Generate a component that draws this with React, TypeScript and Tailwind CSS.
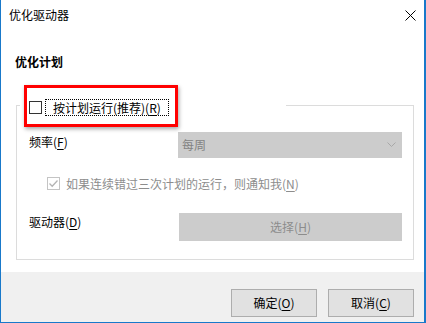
import React from 'react'

const font = { fontFamily: '"Noto Sans CJK SC", "Liberation Sans", sans-serif' }

function Check({ checked, disabled }: { checked?: boolean; disabled?: boolean }) {
  return (
    <div
      className={`w-[13px] h-[13px] shrink-0 border bg-white flex items-center justify-center ${
        disabled ? 'border-[#c4c4c4]' : 'border-[#333333]'
      }`}
    >
      {checked && (
        <svg width="11" height="11" viewBox="0 0 11 11">
          <path d="M1.5 5.5 L4.2 8.2 L9.5 2.5" fill="none" stroke={disabled ? '#b4b4b4' : '#000'} strokeWidth="1.3" />
        </svg>
      )}
    </div>
  )
}

function Key({ k }: { k: string }) {
  return <span className="underline underline-offset-[2px] decoration-[1px]">{k}</span>
}

export default function App() {
  return (
    <div
      className="relative w-[426px] h-[323px] flex flex-col bg-white border-l border-r-2 border-b border-[#1979ca] text-[12px] leading-[16px] text-black overflow-hidden"
      style={font}
    >
      {/* Title bar */}
      <div className="h-[30px] shrink-0 flex items-center justify-between pl-[8px] pr-[8px]">
        <span>优化驱动器</span>
        <svg width="11" height="11" viewBox="0 0 11 11">
          <path d="M0.5 0.5 L10.5 10.5 M10.5 0.5 L0.5 10.5" stroke="#000" strokeWidth="1" />
        </svg>
      </div>

      {/* Body */}
      <div className="h-[242px] shrink-0 flex flex-col">
        <div className="mt-[24px] pl-[14px] font-bold">优化计划</div>

        <div className="mt-[35px] ml-[15px] w-[398px] h-[155px] border border-[#dcdcdc] flex flex-col">
          {/* Group header */}
          <div className="-mt-[7px] ml-[3px] w-[266px] h-[17px] bg-white flex items-center pl-[9px]">
            <Check />
            <div className="ml-[3px] h-[17px] flex items-center px-[7px] border border-dotted border-black">
              按计划运行(推荐)(<Key k="R" />)
            </div>
          </div>

          {/* Frequency */}
          <div className="mt-[16px] h-[26px] flex items-start pl-[12px]">
            <span className="w-[149px] shrink-0 mt-[2px]">
              频率(<Key k="F" />)
            </span>
            <div className="w-[224px] h-[26px] bg-[#cccccc] flex items-center justify-between pl-[4px] pr-[6px] text-[#838383]">
              <span>每周</span>
              <svg width="9" height="6" viewBox="0 0 9 6">
                <path d="M0.5 0.5 L4.5 4.5 L8.5 0.5" fill="none" stroke="#a8a8a8" strokeWidth="1" />
              </svg>
            </div>
          </div>

          {/* Notify */}
          <div className="mt-[19px] h-[13px] flex items-center pl-[30px] text-[#8d8d8d]">
            <Check checked disabled />
            <span className="ml-[6px]">
              如果连续错过三次计划的运行，则通知我(<Key k="N" />)
            </span>
          </div>

          {/* Drives */}
          <div className="mt-[23px] h-[28px] flex items-start pl-[12px]">
            <span className="w-[150px] shrink-0 mt-[1px]">
              驱动器(<Key k="D" />)
            </span>
            <div className="w-[223px] h-[28px] bg-[#cccccc] flex items-center justify-center text-[#8c8c8c]">
              选择(<Key k="H" />)
            </div>
          </div>
        </div>
      </div>

      {/* Footer */}
      <div className="flex-1 bg-[#f0f0f0] flex justify-end items-start gap-[11px] pt-[17px] pr-[10px]">
        <button className="w-[86px] h-[28px] bg-[#e1e1e1] border border-[#adadad] flex items-center justify-center">
          确定(<Key k="O" />)
        </button>
        <button className="w-[86px] h-[28px] bg-[#e1e1e1] border border-[#adadad] flex items-center justify-center">
          取消(<Key k="C" />)
        </button>
      </div>

      {/* Red annotation box */}
      <div className="absolute left-[23px] top-[85px] w-[154px] h-[42px] border-[3px] border-[#ff0000] shadow-[1px_2px_4px_rgba(0,0,0,0.35)] pointer-events-none" />
    </div>
  )
}
